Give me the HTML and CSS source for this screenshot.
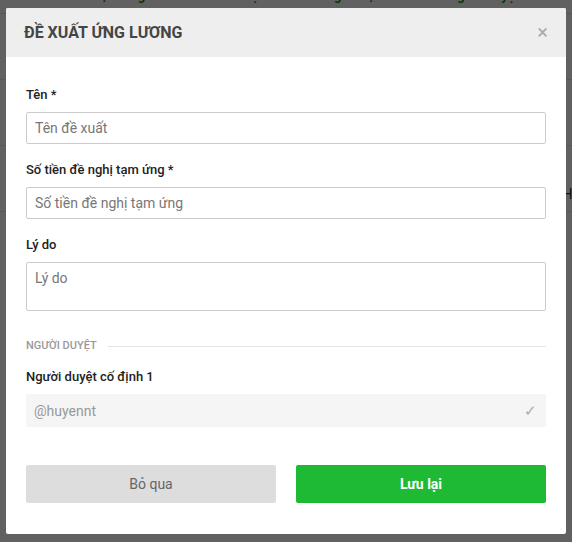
FILE: index.html
```html
<!DOCTYPE html>
<html lang="vi">
<head>
<meta charset="utf-8">
<title>Đề xuất ứng lương</title>
<link rel="stylesheet" href="styles.css">
</head>
<body>
<div class="page">
  <div class="page-head">
    <span>Số tiền tạm ứng</span><span>Nhân sự</span><span>Người tạo</span><span>Người duyệt</span>
  </div>
  <div class="page-row"></div>
  <div class="page-row"></div>
  <div class="page-row"><span class="page-cell">Hi</span></div>
</div>
<div class="overlay"></div>
<div class="modal">
  <div class="modal-header">
    <h2 class="modal-title">ĐỀ XUẤT ỨNG LƯƠNG</h2>
    <span class="modal-close">×</span>
  </div>
  <div class="modal-body">
    <div class="field">
      <label class="field-label">Tên *</label>
      <input class="input" type="text" placeholder="Tên đề xuất">
    </div>
    <div class="field">
      <label class="field-label">Số tiền đề nghị tạm ứng *</label>
      <input class="input" type="text" placeholder="Số tiền đề nghị tạm ứng">
    </div>
    <div class="field">
      <label class="field-label">Lý do</label>
      <textarea class="input textarea" placeholder="Lý do"></textarea>
    </div>
    <div class="section">
      <span class="section-title">NGƯỜI DUYỆT</span>
      <span class="section-line"></span>
    </div>
    <div class="field">
      <label class="field-label">Người duyệt cố định 1</label>
      <div class="readonly">
        <span>@huyennt</span>
        <span class="check">✓</span>
      </div>
    </div>
    <div class="actions">
      <button class="btn btn-cancel">Bỏ qua</button>
      <button class="btn btn-save">Lưu lại</button>
    </div>
  </div>
</div>
</body>
</html>
```

FILE: styles.css
```css
* { box-sizing: border-box; }
html, body { margin: 0; padding: 0; }
body {
  width: 572px;
  height: 542px;
  overflow: hidden;
  font-family: Roboto, "Noto Sans", "Liberation Sans", sans-serif;
  background: #fff;
  position: relative;
}
.page {
  position: absolute;
  inset: 0;
  background: #fff;
}
.page-head {
  height: 36px;
  margin-top: -22px;
  display: flex;
  justify-content: space-around;
  align-items: center;
  padding: 0 20px;
  color: #1a8a1a;
  font-size: 13px;
  font-weight: bold;
  border-bottom: 1px solid #e6e6e6;
}
.page-row {
  height: 66px;
  border-bottom: 1px solid #e6e6e6;
  position: relative;
}
.page-cell {
  position: absolute;
  right: -4px;
  top: 40px;
  color: #333;
  font-size: 14px;
}
.overlay {
  position: absolute;
  inset: 0;
  background: rgba(0, 0, 0, 0.62);
}
.modal {
  position: absolute;
  left: 6px;
  top: 8px;
  width: 560px;
  height: 526px;
  background: #fff;
  border-radius: 2px;
  overflow: hidden;
}
.modal-header {
  height: 49px;
  background: #eeeeee;
  display: flex;
  align-items: center;
  justify-content: space-between;
  padding: 0 18px 0 18px;
}
.modal-title {
  margin: 0;
  font-size: 16px;
  font-weight: bold;
  color: #454545;
}
.modal-close {
  font-size: 20px;
  color: #aaa;
  line-height: 1;
  margin-top: -2px;
}
.modal-body {
  padding: 29px 20px 31px;
  display: flex;
  flex-direction: column;
}
.field {
  display: flex;
  flex-direction: column;
  gap: 8px;
  margin-bottom: 17px;
}
.field-label {
  font-size: 13px;
  line-height: 18px;
  font-weight: 500;
  color: #222;
}
.input {
  width: 100%;
  height: 32px;
  border: 1px solid #cccccc;
  border-radius: 2px;
  padding: 0 8px;
  font-family: inherit;
  font-size: 14px;
  color: #333;
  outline: none;
  background: #fff;
}
.input::placeholder { color: #777; }
.textarea {
  height: 49px;
  resize: none;
  padding: 6px 8px;
  line-height: 18px;
}
.section {
  display: flex;
  align-items: center;
  gap: 11px;
  margin: 11px 0 15px;
}
.section-title {
  font-size: 11px;
  line-height: 14px;
  color: #999;
  font-weight: 500;
  white-space: nowrap;
}
.section-line {
  flex: 1;
  height: 1px;
  background: #e4e4e4;
}
.readonly {
  height: 33px;
  background: #f5f5f5;
  border-radius: 2px;
  display: flex;
  align-items: center;
  justify-content: space-between;
  padding: 0 9px 0 8px;
  font-size: 14px;
  color: #999;
}
.check {
  color: #aaa;
  font-size: 15px;
}
.actions {
  display: flex;
  gap: 20px;
  margin-top: 21px;
}
.btn {
  flex: 1;
  height: 38px;
  border: none;
  border-radius: 2px;
  font-family: inherit;
  font-size: 14px;
}
.btn-cancel {
  background: #dddddd;
  color: #666;
}
.btn-save {
  background: #1fba34;
  color: #fff;
  font-weight: bold;
}
```
